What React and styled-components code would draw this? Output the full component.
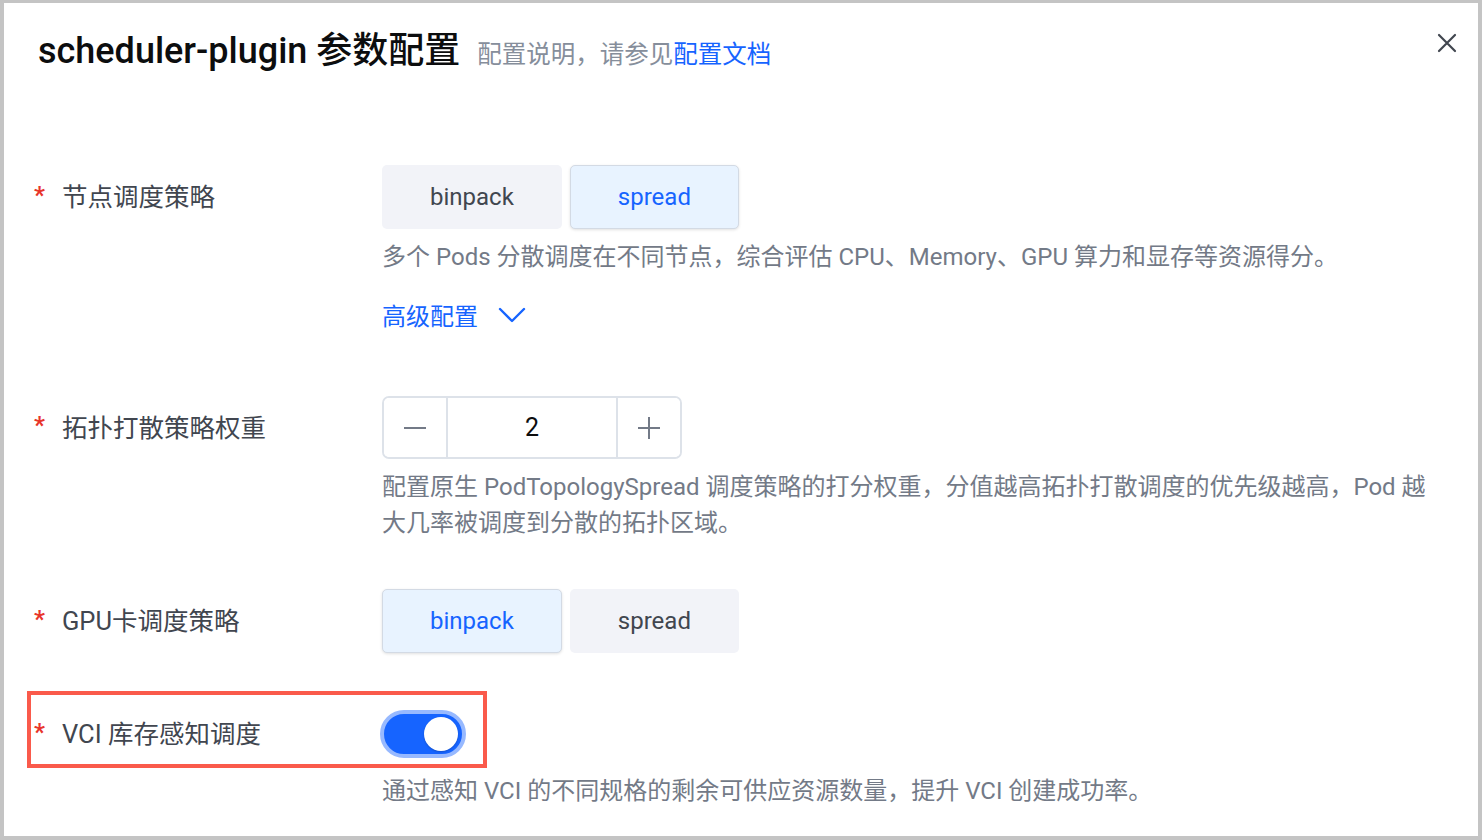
import React, { useState } from 'react';
import styled, { createGlobalStyle } from 'styled-components';

const GlobalStyle = createGlobalStyle`
  html, body {
    margin: 0;
    padding: 0;
    background: #ffffff;
  }
  body {
    font-family: Roboto, "Noto Sans CJK SC", sans-serif;
    color: #1d2129;
  }
`;

const Frame = styled.div`
  box-sizing: border-box;
  width: 1482px;
  height: 840px;
  border-style: solid;
  border-color: #c4c4c4;
  border-width: 3px 4px 4px 4px;
  background: #ffffff;
  overflow: hidden;
`;

const Header = styled.div`
  display: flex;
  align-items: center;
  justify-content: space-between;
  padding: 28px 15px 0 34px;
`;

const TitleGroup = styled.div`
  display: flex;
  align-items: baseline;
  gap: 17px;
`;

const Title = styled.h1`
  margin: 0;
  font-size: 36px;
  font-weight: 500;
  color: #0c0d0e;
  line-height: 40px;
`;

const Hint = styled.span`
  font-size: 24.5px;
  color: #868e9b;
`;

const DocLink = styled.a`
  color: #1664ff;
  text-decoration: none;
`;

const CloseButton = styled.button`
  display: flex;
  align-items: center;
  justify-content: center;
  align-self: flex-start;
  margin-top: -4px;
  width: 32px;
  height: 32px;
  padding: 0;
  border: none;
  background: transparent;
  color: #41464f;
  cursor: pointer;
`;

const Form = styled.div`
  display: flex;
  flex-direction: column;
  padding-top: 94px;
`;

const Row = styled.div`
  position: relative;
  display: grid;
  grid-template-columns: 378px 1fr;
  margin-bottom: ${(p) => p.$gap || 0}px;
`;

const Label = styled.div`
  box-sizing: border-box;
  display: flex;
  align-items: center;
  height: ${(p) => p.$h || 64}px;
  padding: 0 0 5px 30px;
  font-size: 25.5px;
  color: #41464f;
`;

const Star = styled.span`
  width: 28px;
  color: #e8352a;
  font-size: 24px;
  font-weight: 700;
`;

const Control = styled.div`
  display: flex;
  flex-direction: column;
  align-items: flex-start;
`;

const RadioGroup = styled.div`
  display: flex;
  gap: 8px;
`;

const RadioButton = styled.button`
  box-sizing: border-box;
  height: 64px;
  padding: 0 47px;
  border-radius: 5px;
  font-family: Roboto, "Noto Sans CJK SC", sans-serif;
  font-size: 24px;
  cursor: pointer;
  border: 1px solid ${(p) => (p.$active ? '#d3dae4' : 'transparent')};
  background: ${(p) => (p.$active ? '#e8f3ff' : '#f2f3f8')};
  color: ${(p) => (p.$active ? '#1664ff' : '#41464f')};
  box-shadow: ${(p) => (p.$active ? '0 1px 3px rgba(0, 0, 0, 0.12)' : 'none')};
`;

const Help = styled.div`
  margin-top: ${(p) => p.$top || 10}px;
  max-width: 1052px;
  font-size: 24px;
  line-height: 36px;
  color: #737a87;
`;

const Advanced = styled.button`
  display: flex;
  align-items: center;
  gap: 20px;
  margin-top: 22px;
  padding: 0;
  border: none;
  background: transparent;
  font-family: Roboto, "Noto Sans CJK SC", sans-serif;
  font-size: 24px;
  color: #1664ff;
  cursor: pointer;
`;

const Stepper = styled.div`
  box-sizing: border-box;
  display: flex;
  height: 63px;
  border: 2px solid #dde2e9;
  border-radius: 7px;
  overflow: hidden;
`;

const StepButton = styled.button`
  display: flex;
  align-items: center;
  justify-content: center;
  width: 64px;
  padding: 0;
  border: none;
  background: #ffffff;
  color: #737a87;
  cursor: pointer;
  border-${(p) => p.$side}: 2px solid #dde2e9;
`;

const StepValue = styled.div`
  display: flex;
  align-items: center;
  justify-content: center;
  width: 168px;
  font-size: 25px;
  color: #0c0d0e;
`;

const Switch = styled.button`
  position: relative;
  box-sizing: border-box;
  width: 86px;
  height: 48px;
  margin-left: -2px;
  padding: 0;
  border: 4px solid #97b9ff;
  border-radius: 24px;
  background: #1664ff;
  cursor: pointer;
`;

const Knob = styled.span`
  position: absolute;
  top: 3px;
  right: 4px;
  width: 34px;
  height: 34px;
  border-radius: 50%;
  background: #ffffff;
  box-shadow: 0 1px 2px rgba(0, 0, 0, 0.2);
`;

const Highlight = styled.div`
  position: absolute;
  left: 23px;
  top: -19px;
  width: 460px;
  height: 77px;
  box-sizing: border-box;
  border: 4px solid #fa5a4b;
  pointer-events: none;
`;

const Chevron = () => (
  <svg width="28" height="16" viewBox="0 0 28 16" fill="none">
    <path d="M2 2l12 12L26 2" stroke="currentColor" strokeWidth="2.4" strokeLinecap="round" strokeLinejoin="round" />
  </svg>
);

const CloseIcon = () => (
  <svg width="20" height="20" viewBox="0 0 20 20" fill="none">
    <path d="M2 2l16 16M18 2L2 18" stroke="currentColor" strokeWidth="2.2" strokeLinecap="round" />
  </svg>
);

const MinusIcon = () => (
  <svg width="24" height="24" viewBox="0 0 24 24" fill="none">
    <path d="M1 12h22" stroke="currentColor" strokeWidth="2.2" />
  </svg>
);

const PlusIcon = () => (
  <svg width="24" height="24" viewBox="0 0 24 24" fill="none">
    <path d="M1 12h22M12 1v22" stroke="currentColor" strokeWidth="2" />
  </svg>
);

export default () => {
  const [node, setNode] = useState('spread');
  const [gpu, setGpu] = useState('binpack');
  const [weight, setWeight] = useState(2);
  const [vci, setVci] = useState(true);

  return (
    <Frame>
      <GlobalStyle />
      <Header>
        <TitleGroup>
          <Title>scheduler-plugin 参数配置</Title>
          <Hint>
            配置说明，请参见<DocLink href="#">配置文档</DocLink>
          </Hint>
        </TitleGroup>
        <CloseButton aria-label="close">
          <CloseIcon />
        </CloseButton>
      </Header>

      <Form>
        <Row $gap={64}>
          <Label>
            <Star>*</Star>节点调度策略
          </Label>
          <Control>
            <RadioGroup>
              {['binpack', 'spread'].map((v) => (
                <RadioButton key={v} $active={node === v} onClick={() => setNode(v)}>
                  {v}
                </RadioButton>
              ))}
            </RadioGroup>
            <Help>多个 Pods 分散调度在不同节点，综合评估 CPU、Memory、GPU 算力和显存等资源得分。</Help>
            <Advanced>
              高级配置 <Chevron />
            </Advanced>
          </Control>
        </Row>

        <Row $gap={48}>
          <Label $h={63}>
            <Star>*</Star>拓扑打散策略权重
          </Label>
          <Control>
            <Stepper>
              <StepButton $side="right" onClick={() => setWeight(weight - 1)}>
                <MinusIcon />
              </StepButton>
              <StepValue>{weight}</StepValue>
              <StepButton $side="left" onClick={() => setWeight(weight + 1)}>
                <PlusIcon />
              </StepButton>
            </Stepper>
            <Help>
              配置原生 PodTopologySpread 调度策略的打分权重，分值越高拓扑打散调度的优先级越高，Pod 越大几率被调度到分散的拓扑区域。
            </Help>
          </Control>
        </Row>

        <Row $gap={57}>
          <Label>
            <Star>*</Star>GPU卡调度策略
          </Label>
          <Control>
            <RadioGroup>
              {['binpack', 'spread'].map((v) => (
                <RadioButton key={v} $active={gpu === v} onClick={() => setGpu(v)}>
                  {v}
                </RadioButton>
              ))}
            </RadioGroup>
          </Control>
        </Row>

        <Row>
          <Highlight />
          <Label $h={48}>
            <Star>*</Star>VCI 库存感知调度
          </Label>
          <Control>
            <Switch onClick={() => setVci(!vci)} aria-checked={vci}>
              <Knob />
            </Switch>
            <Help $top={15}>通过感知 VCI 的不同规格的剩余可供应资源数量，提升 VCI 创建成功率。</Help>
          </Control>
        </Row>
      </Form>
    </Frame>
  );
};
